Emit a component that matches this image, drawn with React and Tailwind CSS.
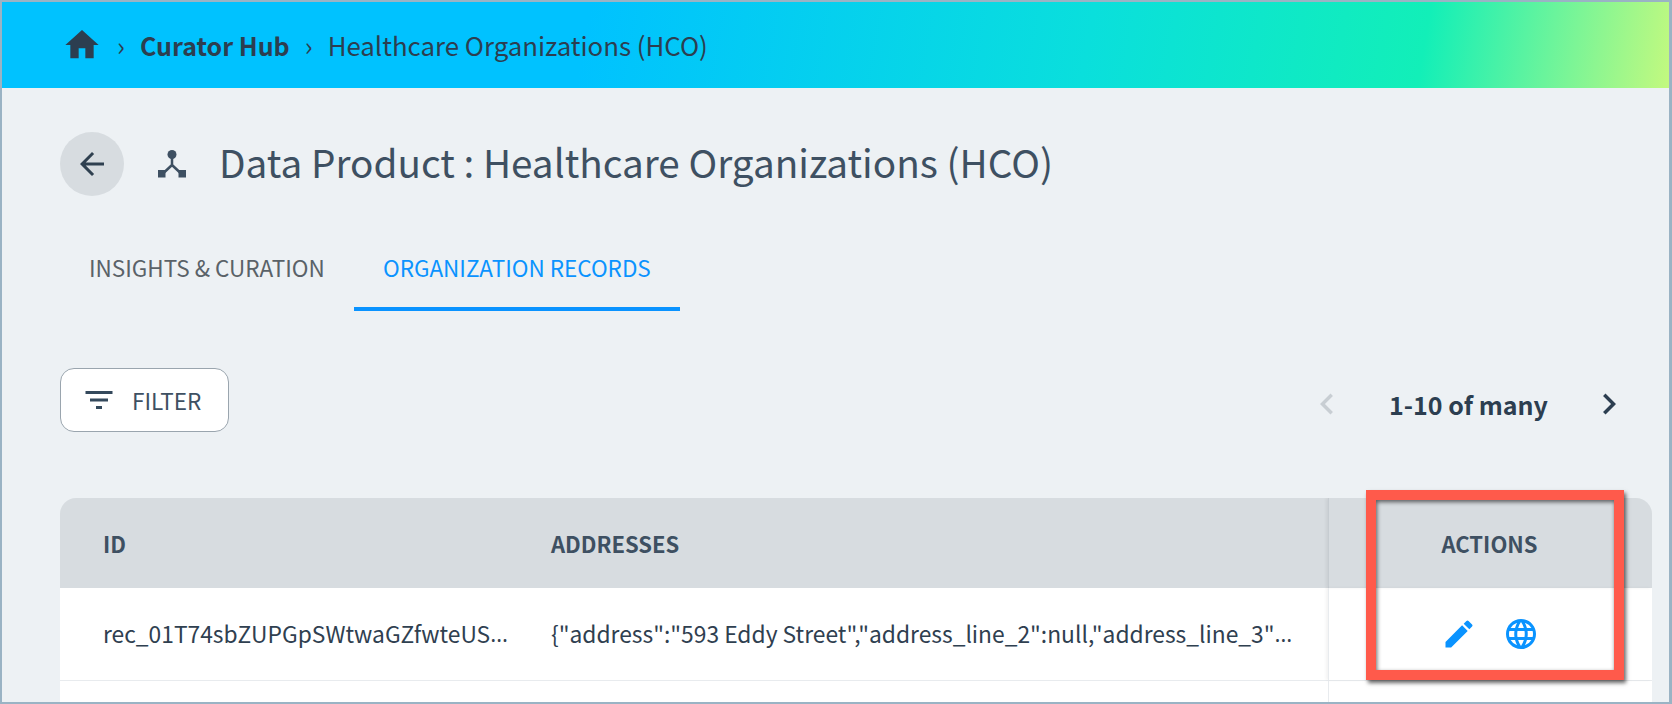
import { MdHome, MdArrowBack, MdFilterList, MdEdit, MdLanguage, MdChevronLeft, MdChevronRight } from 'react-icons/md';

const font = "font-['Noto_Sans_CJK_JP','Liberation_Sans',sans-serif]";

function HierarchyIcon() {
    return (
        <svg viewBox="0 0 28 28" className="w-7 h-7 text-[#3e5062]" fill="currentColor">
            <circle cx="14" cy="4.500" r="4.500" />
            <rect x="0" y="20" width="7.500" height="7.500" />
            <rect x="20.500" y="20" width="7.500" height="7.500" />
            <path d="M14 8v7.500M14 15L5.500 23M14 15l8.500 8" fill="none" stroke="currentColor" strokeWidth="2.500" />
        </svg>
    );
}

// the browser's own ellipsis sits mid-height in the CJK font, so this one is set in Open Sans
function Dots() {
    return <span className="font-['Open_Sans',sans-serif]">…</span>;
}

export default function App() {
    return (
        <div className={`${font} relative h-[704px] overflow-hidden bg-[#edf1f4] border-t-2 border-b-2 border-l-2 border-r-[3px] border-[#9ab3c4] text-[#34495c]`}>
            <div className="h-[86px] pl-[60px] flex items-center bg-[linear-gradient(100deg,#00c2ff_0%,#00c2ff_35%,#0adfdc_65%,#12efb8_85%,#c3f97f_100%)] text-[#2c3e50]">
                <MdHome className="w-[40px] h-[40px] shrink-0" />
                <span className="w-[38px] text-center text-[26px] leading-none">›</span>
                <span className="text-[25px] leading-[32px] font-bold">Curator Hub</span>
                <span className="w-[38px] text-center text-[26px] leading-none">›</span>
                <span className="text-[25.800px] leading-[32px]">Healthcare Organizations (HCO)</span>
            </div>

            <div className="pl-[58px] pr-[17px]">
                <div className="mt-[44px] h-[64px] flex items-center">
                    <button type="button" className="w-[64px] h-[64px] rounded-full bg-[#d7dce0] flex items-center justify-center">
                        <MdArrowBack className="w-[36px] h-[36px] text-[#2f4050]" />
                    </button>
                    <div className="ml-[34px]"><HierarchyIcon /></div>
                    <h1 className="ml-[33px] pb-[6px] text-[38.7px] leading-[50px] text-[#3e5062]">Data Product : Healthcare Organizations (HCO)</h1>
                </div>

                <div className="mt-[40px] flex h-[75px] items-start text-[22.5px] leading-[32px]">
                    <div className="w-[294px] pl-[29px] pt-[15px] text-[#5a6268]">INSIGHTS &amp; CURATION</div>
                    <div className="w-[326px] h-[75px] pl-[29px] pt-[15px] text-[#0a93ff] border-b-4 border-[#0a93ff]">ORGANIZATION RECORDS</div>
                </div>

                <div className="mt-[57px] h-[64px] flex items-center justify-between">
                    <button type="button" className="w-[169px] h-[64px] bg-white border border-[#9aa5ae] rounded-[14px] flex items-center pl-[20px]">
                        <MdFilterList className="w-[36px] h-[36px] text-[#34495c]" />
                        <span className="ml-[15px] text-[22.5px] leading-[30px] text-[#3e5062]">FILTER</span>
                    </button>
                    <div className="flex items-center pr-[22px] pt-[8px] text-[#2c3e50]">
                        <MdChevronLeft className="w-[42px] h-[42px] text-[#c8ced3]" />
                        <span className="ml-[41px] w-[199px] text-[25px] leading-[32px] font-bold">1-10 of many</span>
                        <MdChevronRight className="w-[42px] h-[42px]" />
                    </div>
                </div>

                <div className="mt-[66px] rounded-t-[16px] overflow-hidden">
                    <div className="flex h-[90px] bg-[#d7dce0] text-[22px] leading-[30px] font-bold text-[#3e5062]">
                        <div className="w-[491px] pl-[43px] flex items-center">ID</div>
                        <div className="flex-1 flex items-center">ADDRESSES</div>
                        <div className="w-[324px] pr-[2px] border-l border-[#c6ccd1] shadow-[-2px_0_3px_rgba(0,0,0,0.06)] flex items-center justify-center">ACTIONS</div>
                    </div>
                    <div className="flex h-[93px] bg-white border-b border-[#e8ebee] text-[22.8px] leading-[32px] text-[#2f4050]">
                        <div className="w-[491px] pl-[43px] flex items-center whitespace-nowrap">rec_01T74sbZUPGpSWtwaGZfwteUS<Dots /></div>
                        <div className="flex-1 flex items-center min-w-0 whitespace-nowrap">{'{"address":"593 Eddy Street","address_line_2":null,"address_line_3"'}<Dots /></div>
                        <div className="w-[324px] pr-[2px] border-l border-[#e8ebee] shadow-[-2px_0_3px_rgba(0,0,0,0.05)] flex items-center justify-center gap-[26px] text-[#0a93ff]">
                            <MdEdit className="w-[36px] h-[36px]" />
                            <MdLanguage className="w-[36px] h-[36px]" />
                        </div>
                    </div>
                    <div className="flex h-[40px] bg-white">
                        <div className="flex-1" />
                        <div className="w-[324px] border-l border-[#e8ebee]" />
                    </div>
                </div>
            </div>

            {/* red highlight over the actions column */}
            <div className="absolute left-[1364px] top-[488px] w-[258px] h-[190px] border-[10px] border-[#ff5a4b] shadow-[2px_3px_4px_rgba(0,0,0,0.6),inset_1px_2px_4px_rgba(0,0,0,0.6)]" />
        </div>
    );
}
